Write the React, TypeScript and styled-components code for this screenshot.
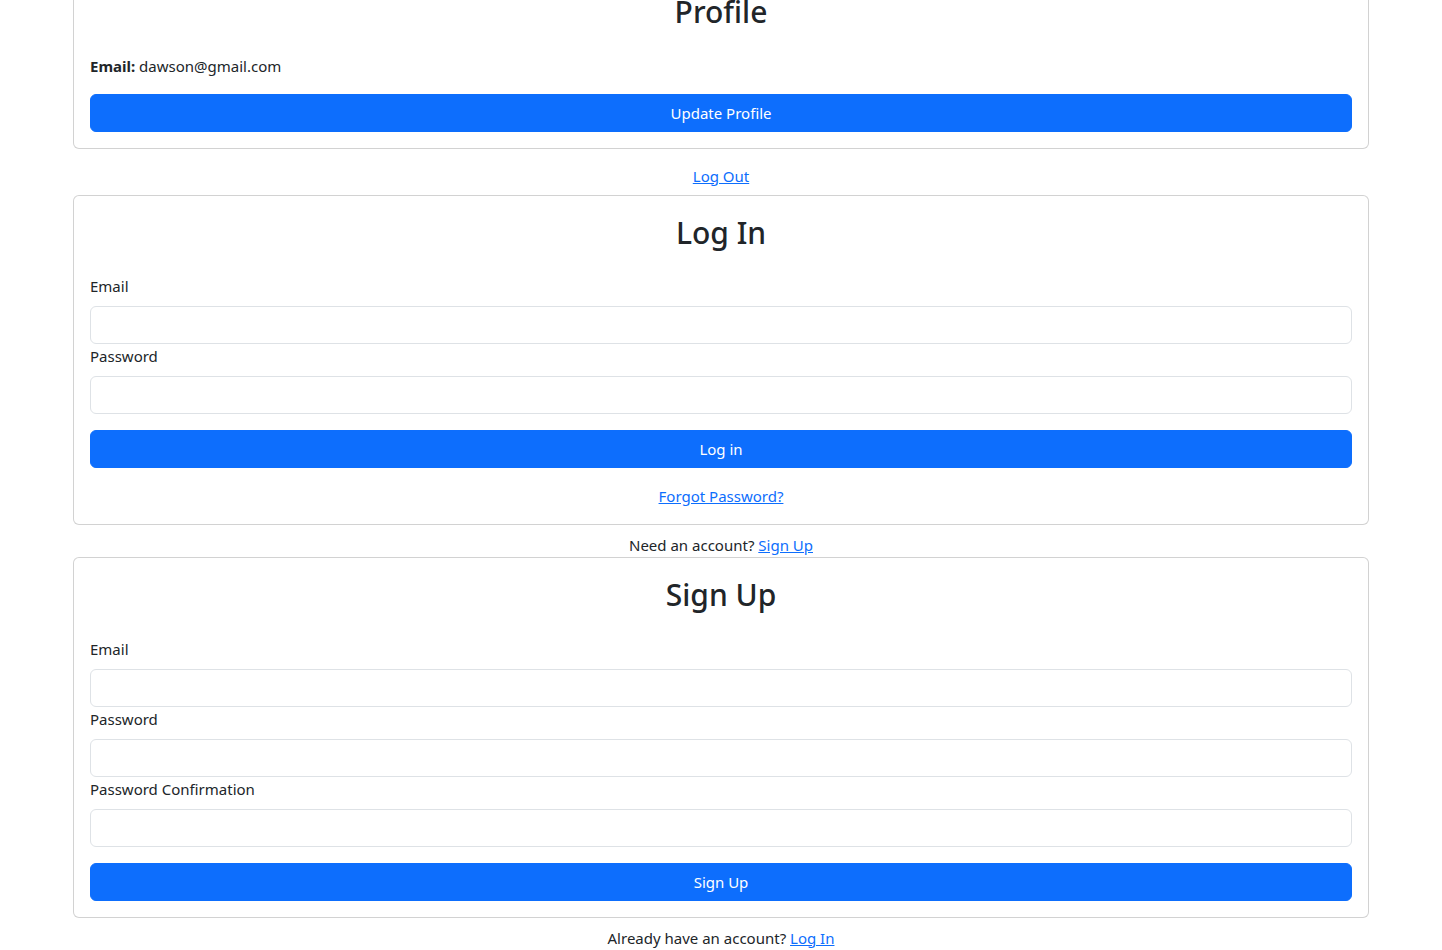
import React from "react";
import styled, { createGlobalStyle } from "styled-components";

const Global = createGlobalStyle`
  *, *::before, *::after { box-sizing: border-box; }
  html, body { margin: 0; padding: 0; }
  body {
    font-family: "Noto Sans", "Open Sans", "Liberation Sans", sans-serif;
    font-size: 15px;
    line-height: 24px;
    color: #212529;
    background: #fff;
  }
`;

const Page = styled.div`
  height: 100vh;
  display: flex;
  flex-direction: column;
  justify-content: center;
  align-items: center;
`;

const Container = styled.div`
  width: 100%;
  max-width: 1320px;
  padding: 0 12px 26px;
  flex-shrink: 0;
`;

const Card = styled.div`
  border: 1px solid rgba(0, 0, 0, 0.175);
  border-radius: 6px;
  background: #fff;
`;

const CardBody = styled.div`
  padding: 16px;
`;

const Title = styled.h2`
  margin: 0 0 22px;
  padding-top: 2px;
  font-size: 30px;
  font-weight: 500;
  line-height: 38.4px;
  text-align: center;
`;

const InfoLine = styled.div`
  line-height: 24px;
  strong { font-weight: 700; }
`;

const Label = styled.label`
  display: block;
  margin-bottom: 8px;
  line-height: 24px;
`;

const Input = styled.input`
  display: block;
  width: 100%;
  height: 38px;
  padding: 6px 12px;
  font: inherit;
  color: #212529;
  background: #fff;
  border: 1px solid #dee2e6;
  border-radius: 6px;
  outline: none;
`;

const PrimaryButton = styled.button`
  display: block;
  width: 100%;
  height: 38px;
  margin-top: 16px;
  padding: 6px 12px;
  font: inherit;
  line-height: 24px;
  color: #fff;
  background: #0d6efd;
  border: 1px solid #0d6efd;
  border-radius: 6px;
  cursor: pointer;
`;

const Center = styled.div<{ $mt: number }>`
  width: 100%;
  text-align: center;
  margin-top: ${(p) => p.$mt}px;
  line-height: 24px;
`;

const Link = styled.a`
  color: #0d6efd;
  text-decoration: underline;
  cursor: pointer;
`;

const LinkButton = styled.button`
  padding: 6px 12px;
  font: inherit;
  line-height: 24px;
  color: #0d6efd;
  text-decoration: underline;
  background: transparent;
  border: 1px solid transparent;
  cursor: pointer;
`;

const Field: React.FC<{ label: string; type: string }> = ({ label, type }) => (
  <div>
    <Label>{label}</Label>
    <Input type={type} />
  </div>
);

export default function App() {
  return (
    <>
      <Global />
      <Page>
        <Container>
          <Card>
            <CardBody>
              <Title>Profile</Title>
              <InfoLine>
                <strong>Email:</strong> dawson@gmail.com
              </InfoLine>
              <PrimaryButton>Update Profile</PrimaryButton>
            </CardBody>
          </Card>
          <Center $mt={8}>
            <LinkButton>Log Out</LinkButton>
          </Center>

          <Card>
            <CardBody>
              <Title>Log In</Title>
              <form onSubmit={(e) => e.preventDefault()}>
                <Field label="Email" type="email" />
                <Field label="Password" type="password" />
                <PrimaryButton type="submit">Log in</PrimaryButton>
              </form>
              <Center $mt={16}>
                <Link>Forgot Password?</Link>
              </Center>
            </CardBody>
          </Card>
          <Center $mt={8}>
            Need an account? <Link>Sign Up</Link>
          </Center>

          <Card>
            <CardBody>
              <Title>Sign Up</Title>
              <form onSubmit={(e) => e.preventDefault()}>
                <Field label="Email" type="email" />
                <Field label="Password" type="password" />
                <Field label="Password Confirmation" type="password" />
                <PrimaryButton type="submit">Sign Up</PrimaryButton>
              </form>
            </CardBody>
          </Card>
          <Center $mt={8}>
            Already have an account? <Link>Log In</Link>
          </Center>
        </Container>
      </Page>
    </>
  );
}
